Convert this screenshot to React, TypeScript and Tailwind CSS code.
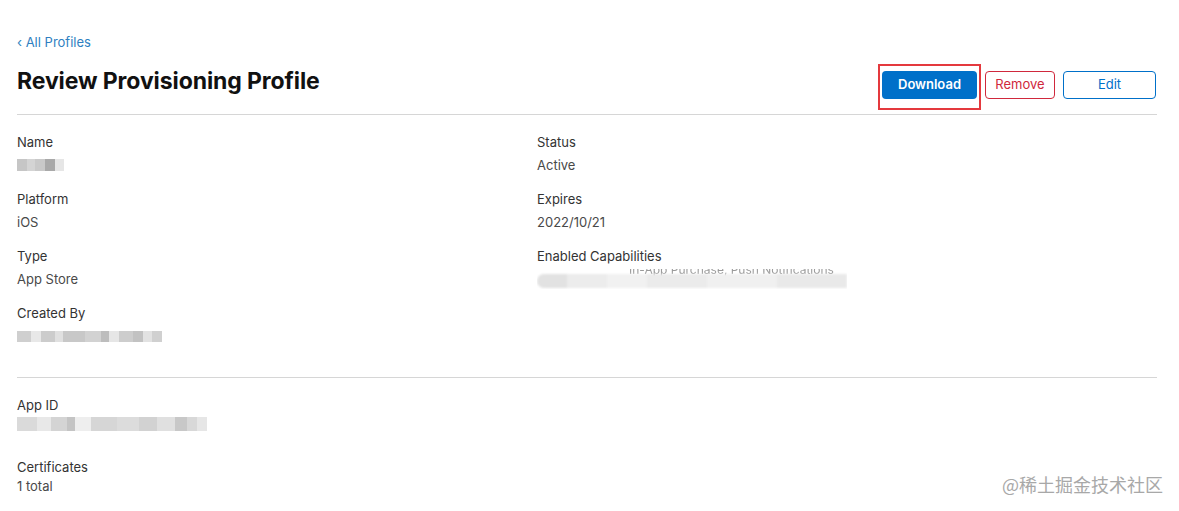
import React from "react";

function Blur({ blocks, h = 14 }: { blocks: [number, string][]; h?: number }) {
  return (
    <div className="flex blur-[0.6px]" style={{ height: h }}>
      {blocks.map(([w, c], i) => (
        <div key={i} style={{ width: w, background: c }} />
      ))}
    </div>
  );
}

function Field({ label, children }: { label: string; children: React.ReactNode }) {
  return (
    <div className="flex flex-col">
      <div className="text-[13px] leading-[20px] text-[#333333]">{label}</div>
      <div className="mt-[3px] text-[13px] leading-[20px] text-[#494949] h-[20px] flex items-center">{children}</div>
    </div>
  );
}

export default function App() {
  return (
    <div
      className="relative w-[1179px] h-[511px] bg-white overflow-hidden"
      style={{ fontFamily: "Inter, 'Noto Sans', sans-serif" }}
    >
      <div className="pl-[17px] pr-[22px] pt-[32px]">
        <a className="block text-[13px] leading-[20px] text-[#2f7fc1]">‹ All Profiles</a>
        <div className="mt-[15px] h-[47px] flex justify-between items-start">
          <h1 className="text-[23px] leading-[28px] font-bold text-[#111111] tracking-[-0.1px]">
            Review Provisioning Profile
          </h1>
          <div className="mt-[4px] flex gap-[8px] mr-[1px]">
            <div className="relative">
              <button className="w-[95px] h-[28px] rounded-[4px] bg-[#0070c9] text-white text-[13px] font-semibold">
                Download
              </button>
              <div className="absolute -left-[4px] -top-[7px] -right-[4px] -bottom-[11px] border-2 border-[#e4393e] pointer-events-none" />
            </div>
            <button className="w-[70px] h-[28px] rounded-[4px] border border-[#d0283c] text-[#d0283c] text-[13px]">
              Remove
            </button>
            <button className="w-[93px] h-[28px] rounded-[4px] border border-[#0070c9] text-[#0070c9] text-[13px]">
              Edit
            </button>
          </div>
        </div>
        <div className="border-t border-[#d6d6d6]" />
        <div className="pt-[17px] pb-[31px] grid grid-cols-[520px_1fr]">
          <div className="flex flex-col gap-[14px]">
            <Field label="Name">
              <Blur
                h={12}
                blocks={[
                  [10, "#c6c6c6"],
                  [8, "#d4d4d4"],
                  [10, "#c9c9c9"],
                  [10, "#a9a9a9"],
                  [9, "#e6e6e6"],
                ]}
              />
            </Field>
            <Field label="Platform">iOS</Field>
            <Field label="Type">App Store</Field>
            <Field label="Created By">
              <Blur
                h={11}
                blocks={[
                  [14, "#cfcfcf"],
                  [10, "#e8e8e8"],
                  [14, "#cccccc"],
                  [8, "#e0e0e0"],
                  [22, "#c8c8c8"],
                  [16, "#d2d2d2"],
                  [8, "#bdbdbd"],
                  [10, "#e6e6e6"],
                  [14, "#cdcdcd"],
                  [10, "#c2c2c2"],
                  [9, "#e2e2e2"],
                  [10, "#d0d0d0"],
                ]}
              />
            </Field>
          </div>
          <div className="flex flex-col gap-[14px]">
            <Field label="Status">Active</Field>
            <Field label="Expires">2022/10/21</Field>
            <Field label="Enabled Capabilities">
              <div className="relative h-[20px] w-[310px] overflow-hidden">
                <div className="absolute left-[92px] -top-[9px] whitespace-nowrap text-[12px] leading-[20px] text-[#9a9a9a] blur-[0.4px]">
                  In-App Purchase, Push Notifications
                </div>
                <div className="absolute left-0 top-[5px] w-[310px] h-[14px] flex blur-[1px]">
                  <div className="w-[30px] bg-[#e2e2e2] rounded-l-full" />
                  <div className="w-[40px] bg-[#ececec]" />
                  <div className="w-[40px] bg-[#f1f1f1]" />
                  <div className="w-[60px] bg-[#ebebeb]" />
                  <div className="w-[70px] bg-[#f0f0f0]" />
                  <div className="w-[70px] bg-[#e9e9e9]" />
                </div>
              </div>
            </Field>
          </div>
        </div>
        <div className="border-t border-[#d6d6d6]" />
        <div className="pt-[17px] flex flex-col gap-[24px]">
          <div>
            <div className="text-[13px] leading-[20px] text-[#333333]">App ID</div>
            <div className="h-[18px] flex items-center">
              <Blur
                h={14}
                blocks={[
                  [20, "#dadada"],
                  [14, "#e8e8e8"],
                  [16, "#d4d4d4"],
                  [8, "#c4c4c4"],
                  [16, "#eeeeee"],
                  [26, "#d6d6d6"],
                  [22, "#dcdcdc"],
                  [18, "#d2d2d2"],
                  [18, "#e0e0e0"],
                  [12, "#c8c8c8"],
                  [10, "#d8d8d8"],
                  [10, "#e6e6e6"],
                ]}
              />
            </div>
          </div>
          <div>
            <div className="text-[13px] leading-[20px] text-[#333333]">Certificates</div>
            <div className="text-[13px] leading-[18px] text-[#494949]">1 total</div>
          </div>
        </div>
      </div>
      <div
        className="absolute right-[16px] top-[473px] text-[18px] leading-[22px] text-[#a8a8a8]"
        style={{ fontFamily: "'Noto Sans CJK SC', sans-serif" }}
      >
        @稀土掘金技术社区
      </div>
    </div>
  );
}
